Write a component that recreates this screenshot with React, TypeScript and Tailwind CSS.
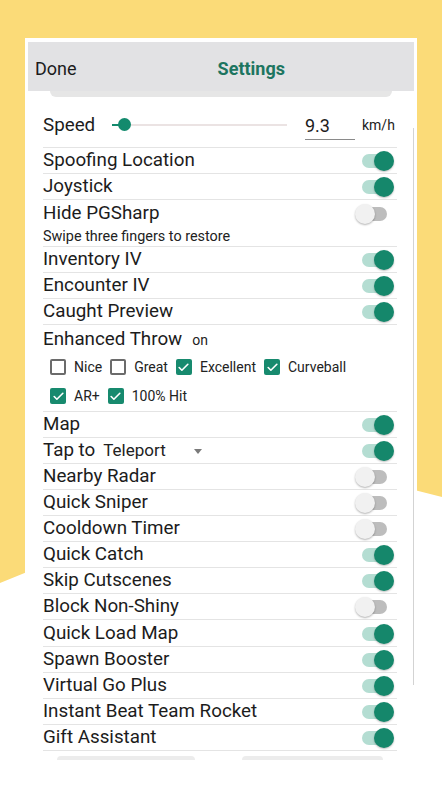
import { Check } from "lucide-react";

type Row = { label: string; on: boolean };

const topRows: Row[] = [
  { label: "Spoofing Location", on: true },
  { label: "Joystick", on: true },
];

const ivRows: Row[] = [
  { label: "Inventory IV", on: true },
  { label: "Encounter IV", on: true },
  { label: "Caught Preview", on: true },
];

const bottomRows: Row[] = [
  { label: "Nearby Radar", on: false },
  { label: "Quick Sniper", on: false },
  { label: "Cooldown Timer", on: false },
  { label: "Quick Catch", on: true },
  { label: "Skip Cutscenes", on: true },
  { label: "Block Non-Shiny", on: false },
  { label: "Quick Load Map", on: true },
  { label: "Spawn Booster", on: true },
  { label: "Virtual Go Plus", on: true },
  { label: "Instant Beat Team Rocket", on: true },
  { label: "Gift Assistant", on: true },
];

// 안드로이드 머티리얼 스위치 모양 그대로
function Switch({ on }: { on: boolean }) {
  return (
    <div className="relative h-[20px] w-[39px] shrink-0">
      <div
        className={
          on
            ? "absolute top-[3px] left-[7px] h-[14px] w-[28px] rounded-full bg-[#b4ddd2]"
            : "absolute top-[3px] left-[4px] h-[14px] w-[28px] rounded-full bg-[#bdbdbd]"
        }
      />
      <div
        className={
          on
            ? "absolute top-0 left-[19px] h-[20px] w-[20px] rounded-full bg-[#15876b] shadow-[0_1px_2px_rgba(0,0,0,0.25)]"
            : "absolute top-0 left-0 h-[20px] w-[20px] rounded-full bg-[#f1f1f1] shadow-[0_1px_2px_rgba(0,0,0,0.3)]"
        }
      />
    </div>
  );
}

function Box({ checked, label }: { checked: boolean; label: string }) {
  return (
    <div className="flex items-center gap-[8px]">
      {checked ? (
        <div className="flex h-[16px] w-[16px] items-center justify-center rounded-[2px] bg-[#178a6e]">
          <Check className="h-[13px] w-[13px] text-white" strokeWidth={3} />
        </div>
      ) : (
        <div className="h-[16px] w-[16px] rounded-[2px] border-2 border-[#6b6b6b]" />
      )}
      <span className="text-[14px] text-[#222]">{label}</span>
    </div>
  );
}

function ToggleRow({ row }: { row: Row }) {
  return (
    <div className="flex h-[26px] items-center justify-between border-b border-[#e4e4e4] pr-[3px]">
      <span className="text-[18.8px] text-[#1c1c1c]">{row.label}</span>
      <Switch on={row.on} />
    </div>
  );
}

export default function App() {
  return (
    <div className="relative h-[800px] w-[442px] overflow-hidden bg-white font-['Roboto','Noto_Sans',sans-serif]">
      {/* 노란 배경 — 아래쪽이 비스듬히 잘림 */}
      <div className="absolute inset-0 bg-[#fbdb78] [clip-path:polygon(0_0,100%_0,100%_497px,300px_461px,0_583px)]" />

      <div className="relative mt-[38px] ml-[25px] w-[392px] bg-white px-[3px] pt-[4px]">
        <div className="flex h-[49px] items-center bg-[#e2e2e4] pt-[4px] pl-[7px]">
          <span className="text-[18px] text-[#1c1c1c]">Done</span>
          <span className="ml-[141px] text-[18px] font-bold text-[#1d7560]">Settings</span>
        </div>
        <div className="mx-[22px] h-[6px] rounded-b-[12px] bg-[#e6e6e6]" />

        {/* 스크롤바 */}
        <div className="absolute top-[90px] right-[3px] h-[557px] w-[1px] bg-[#d3d3d3]" />

        <div className="pr-[17px] pl-[15px]">
          <div className="flex h-[51px] items-center border-b border-[#e4e4e4] pt-[6px]">
            <span className="w-[69px] text-[18.8px] text-[#1c1c1c]">Speed</span>
            <div className="relative h-[14px] w-[175px]">
              <div className="absolute top-[6px] left-0 h-[2px] w-full bg-[#ebe3e3]" />
              <div className="absolute top-[6px] left-0 h-[2px] w-[12px] bg-[#138a6d]" />
              <div className="absolute top-0 left-[6px] h-[13px] w-[13px] rounded-full bg-[#138a6d]" />
            </div>
            <div className="mt-[4px] ml-[18px] w-[50px] border-b border-[#8a8a8a] pb-[2px] text-[18px] leading-[22px] text-[#1c1c1c]">
              9.3
            </div>
            <span className="ml-[7px] text-[14px] text-[#222]">km/h</span>
          </div>

          {topRows.map((r) => (
            <ToggleRow key={r.label} row={r} />
          ))}

          <div className="border-b border-[#e4e4e4]">
            <div className="flex h-[27px] items-center justify-between pr-[3px]">
              <span className="text-[18.8px] text-[#1c1c1c]">Hide PGSharp</span>
              <Switch on={false} />
            </div>
            <div className="flex h-[19px] items-center text-[14.4px] text-[#222]">
              Swipe three fingers to restore
            </div>
          </div>

          {ivRows.map((r) => (
            <ToggleRow key={r.label} row={r} />
          ))}

          <div className="border-b border-[#e4e4e4]">
            <div className="flex h-[28px] items-center">
              <span className="text-[18.8px] text-[#1c1c1c]">Enhanced Throw</span>
              <span className="mt-[3px] ml-[10px] text-[14px] text-[#222]">on</span>
            </div>
            <div className="flex h-[28px] items-center gap-[8px] pl-[7px]">
              <Box checked={false} label="Nice" />
              <Box checked={false} label="Great" />
              <Box checked label="Excellent" />
              <Box checked label="Curveball" />
            </div>
            <div className="flex h-[30px] items-center gap-[8px] pl-[7px]">
              <Box checked label="AR+" />
              <Box checked label="100% Hit" />
            </div>
          </div>

          <ToggleRow row={{ label: "Map", on: true }} />

          <div className="flex h-[26px] items-center justify-between border-b border-[#e4e4e4] pr-[3px]">
            <div className="flex items-center">
              <span className="text-[18.8px] text-[#1c1c1c]">Tap to</span>
              <span className="ml-[8px] w-[91px] text-[17px] text-[#222]">Teleport</span>
              <span className="mt-[1px] h-0 w-0 border-x-[4px] border-t-[5px] border-x-transparent border-t-[#7a7a7a]" />
            </div>
            <Switch on />
          </div>

          {bottomRows.slice(0, 6).map((r) => (
            <ToggleRow key={r.label} row={r} />
          ))}
          <div className="h-[1px]" />
          {bottomRows.slice(6).map((r) => (
            <ToggleRow key={r.label} row={r} />
          ))}

          <div className="flex justify-between px-[14px] pt-[5px]">
            <div className="h-[4px] w-[138px] rounded-t-[8px] bg-[#ececec]" />
            <div className="h-[4px] w-[141px] rounded-t-[8px] bg-[#ececec]" />
          </div>
        </div>
        <div className="h-[40px]" />
      </div>
    </div>
  );
}
